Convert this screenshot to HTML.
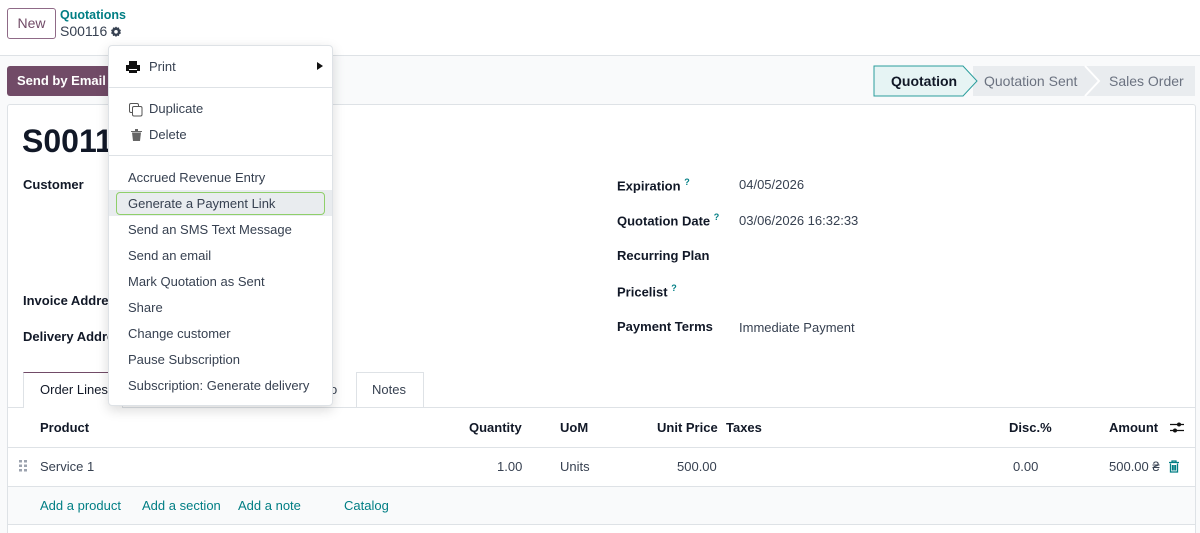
<!DOCTYPE html>
<html><head><style>
*{box-sizing:border-box;margin:0;padding:0}
html,body{width:1200px;height:533px;overflow:hidden}
body{background:#f9fafb;font-family:"Liberation Sans",sans-serif;font-size:13px;color:#374151;position:relative}
.a{position:absolute;white-space:nowrap}
.top{position:absolute;left:0;top:0;width:1200px;height:56px;background:#fff;border-bottom:1px solid #dee2e6}
.b{font-weight:bold;color:#111827}
.t{color:#017e84}
</style></head><body>
<div class="top"></div>
<div class="a" style="left:7px;top:8px;width:49px;height:31px;border:1px solid #8f6a87;border-radius:3px;color:#714b67;font-size:14px;text-align:center;line-height:29px">New</div>
<div class="a t b" style="left:60px;top:8px;font-size:12.5px;color:#017e84">Quotations</div>
<div class="a" style="left:60px;top:23px;font-size:14px;color:#374151">S00116</div>
<svg class="a" style="left:110px;top:26px" width="12" height="12" viewBox="0 0 12 12"><path d="M6 0.5L7.2 1.8L9 1.4L9.3 3.2L11 4L10.2 5.6L11 7.4L9.3 8.1L9 10L7.2 9.6L6 11L4.8 9.6L3 10L2.7 8.1L1 7.4L1.8 5.6L1 4L2.7 3.2L3 1.4L4.8 1.8Z" fill="#374151"/><circle cx="6" cy="5.8" r="1.8" fill="#fff"/></svg>

<div class="a" style="left:7px;top:66px;width:110px;height:30px;background:#714b67;border-radius:3px;color:#fff;font-weight:bold;line-height:30px;padding-left:10px">Send by Email</div>

<svg class="a" style="left:873px;top:65px" width="322" height="32">
<path d="M100 1H212L226 16L212 31H100Z" fill="#e9ecef"/>
<path d="M212 1H322V31H212L226 16Z" fill="#e9ecef"/>
<path d="M212 1L226 16L212 31" stroke="#fff" stroke-width="2" fill="none"/>
<path d="M1 1H90L104 16L90 31H1Z" fill="#e6f4f4" stroke="#2a9d9c" stroke-width="1"/>
</svg>
<div class="a b" style="left:891px;top:73px;font-size:14px">Quotation</div>
<div class="a" style="left:984px;top:73px;font-size:14px;color:#6b7280">Quotation Sent</div>
<div class="a" style="left:1109px;top:73px;font-size:14px;color:#6b7280">Sales Order</div>

<div class="a" style="left:7px;top:104px;width:1189px;height:440px;background:#fff;border:1px solid #dee2e6;border-radius:3px"></div>
<div class="a b" style="left:22px;top:123px;font-size:32px">S00116</div>
<div class="a b" style="left:23px;top:177px">Customer</div>
<div class="a b" style="left:23px;top:293px">Invoice Address</div>
<div class="a b" style="left:23px;top:329px">Delivery Address</div>
<div class="a b" style="left:617px;top:177px">Expiration <sup class="t" style="font-size:9px">?</sup></div>
<div class="a" style="left:739px;top:177px">04/05/2026</div>
<div class="a b" style="left:617px;top:212px">Quotation Date <sup class="t" style="font-size:9px">?</sup></div>
<div class="a" style="left:739px;top:213px">03/06/2026 16:32:33</div>
<div class="a b" style="left:617px;top:248px">Recurring Plan</div>
<div class="a b" style="left:617px;top:283px">Pricelist <sup class="t" style="font-size:9px">?</sup></div>
<div class="a b" style="left:617px;top:319px">Payment Terms</div>
<div class="a" style="left:739px;top:320px">Immediate Payment</div>

<div class="a" style="left:8px;top:407px;width:1187px;border-top:1px solid #dee2e6"></div>
<div class="a" style="left:23px;top:372px;width:100px;height:36px;background:#fff;border:1px solid #dee2e6;border-top:1px solid #714b67;border-bottom:none"></div>
<div class="a" style="left:40px;top:382px;color:#111827">Order Lines</div>
<div class="a" style="left:356px;top:372px;width:68px;height:36px;border:1px solid #dee2e6;border-bottom:none"></div>
<div class="a" style="left:372px;top:382px">Notes</div>
<div class="a" style="left:330px;top:382px">o</div>

<div class="a b" style="left:40px;top:420px">Product</div>
<div class="a b" style="left:469px;top:420px">Quantity</div>
<div class="a b" style="left:560px;top:420px">UoM</div>
<div class="a b" style="left:657px;top:420px">Unit Price</div>
<div class="a b" style="left:726px;top:420px">Taxes</div>
<div class="a b" style="left:1009px;top:420px">Disc.%</div>
<div class="a b" style="left:1109px;top:420px">Amount</div>
<svg class="a" style="left:1170px;top:421px" width="14" height="13"><path d="M0 3.5H14M0 9.5H14" stroke="#111" stroke-width="1.3"/><circle cx="9" cy="3.5" r="2" fill="#111"/><circle cx="5" cy="9.5" r="2" fill="#111"/></svg>
<div class="a" style="left:8px;top:447px;width:1187px;border-top:1px solid #dee2e6"></div>
<svg class="a" style="left:19px;top:460px" width="8" height="12"><g fill="#9ca3af"><rect x="0" y="0" width="3" height="2.5"/><rect x="5" y="0" width="3" height="2.5"/><rect x="0" y="4.5" width="3" height="2.5"/><rect x="5" y="4.5" width="3" height="2.5"/><rect x="0" y="9" width="3" height="2.5"/><rect x="5" y="9" width="3" height="2.5"/></g></svg>
<div class="a" style="left:40px;top:459px">Service 1</div>
<div class="a" style="left:497px;top:459px">1.00</div>
<div class="a" style="left:560px;top:459px">Units</div>
<div class="a" style="left:677px;top:459px">500.00</div>
<div class="a" style="left:1013px;top:459px">0.00</div>
<div class="a" style="left:1109px;top:459px">500.00 ₴</div>
<svg class="a" style="left:1168px;top:460px" width="12" height="13"><path d="M1 2.5H11M4 2.5V1H8V2.5M2.5 3.5V12H9.5V3.5M4.5 5V10.5M6 5V10.5M7.5 5V10.5" stroke="#017e84" stroke-width="1.3" fill="none"/></svg>
<div class="a" style="left:8px;top:486px;width:1187px;height:39px;background:#f9fafb;border-top:1px solid #dee2e6;border-bottom:1px solid #dee2e6"></div>
<div class="a t" style="left:40px;top:498px">Add a product</div>
<div class="a t" style="left:142px;top:498px">Add a section</div>
<div class="a t" style="left:238px;top:498px">Add a note</div>
<div class="a t" style="left:344px;top:498px">Catalog</div>

<div class="a" style="left:108px;top:45px;width:225px;height:361px;background:#fff;border:1px solid #dee2e6;border-radius:4px;box-shadow:0 4px 12px rgba(0,0,0,.15)">
<div class="a" style="left:0;top:41px;width:223px;border-top:1px solid #dee2e6"></div>
<div class="a" style="left:0;top:109px;width:223px;border-top:1px solid #dee2e6"></div>
<svg class="a" style="left:17px;top:15px" width="14" height="12"><path d="M3 0H11V4H3Z M0 4H14V10H11V8H3V10H0Z M3 9H11V12H3Z" fill="#111"/></svg>
<div class="a" style="left:40px;top:13px;color:#374151">Print</div>
<svg class="a" style="left:208px;top:16px" width="6" height="8"><path d="M0 0L6 4L0 8Z" fill="#111"/></svg>
<svg class="a" style="left:20px;top:57px" width="14" height="14"><rect x="0.5" y="0.5" width="9" height="9" rx="1.5" fill="none" stroke="#555"/><rect x="3.5" y="3.5" width="9.5" height="9.5" rx="1.5" fill="#fff" stroke="#555"/></svg>
<div class="a" style="left:40px;top:55px">Duplicate</div>
<svg class="a" style="left:22px;top:83px" width="11" height="12"><path d="M0 2H11V3H0Z M4 0H7V2H4Z M1 3.5H10L9 12H2Z" fill="#666"/></svg>
<div class="a" style="left:40px;top:81px">Delete</div>
<div class="a" style="left:19px;top:124px">Accrued Revenue Entry</div>
<div class="a" style="left:0;top:144px;width:223px;height:26px;background:#e9ecef"></div>
<div class="a" style="left:7px;top:146px;width:209px;height:23px;border:1px solid #8fcf6a;border-radius:4px"></div>
<div class="a" style="left:19px;top:150px">Generate a Payment Link</div>
<div class="a" style="left:19px;top:176px">Send an SMS Text Message</div>
<div class="a" style="left:19px;top:202px">Send an email</div>
<div class="a" style="left:19px;top:228px">Mark Quotation as Sent</div>
<div class="a" style="left:19px;top:254px">Share</div>
<div class="a" style="left:19px;top:280px">Change customer</div>
<div class="a" style="left:19px;top:306px">Pause Subscription</div>
<div class="a" style="left:19px;top:332px">Subscription: Generate delivery</div>
</div>
</body></html>
